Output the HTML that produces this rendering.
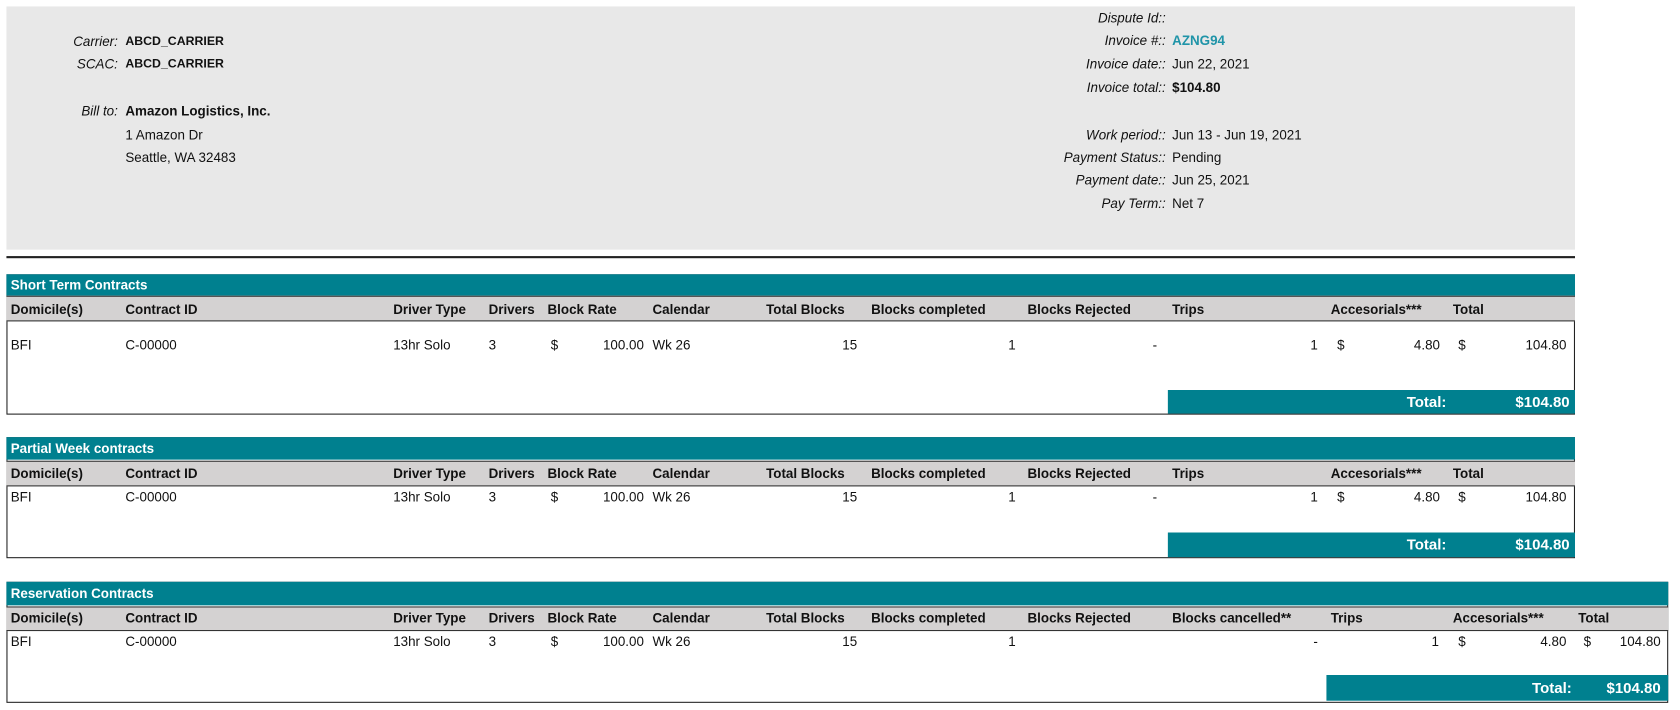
<!DOCTYPE html>
<html><head><meta charset="utf-8"><style>
body{margin:0;background:#fff;width:1680px;height:710px;overflow:hidden}
#w{position:absolute;left:0;top:0;width:1568px;height:663px;transform:scale(1.07143);transform-origin:0 0;font-family:"Liberation Sans",sans-serif;font-size:12.5px;color:#111}
div{position:absolute;white-space:nowrap}
.i{font-style:italic}
.b{font-weight:bold}
.l{line-height:16px}
.teal{background:#00808f}
.hdr{background:#d4d2d2;border-top:1px solid #333;border-bottom:1px solid #333}
.tt{color:#fff;font-weight:bold;font-size:12.5px}
.tot{color:#fff;font-weight:bold;font-size:14px}
</style></head><body><div id="w">
<div style="left:6px;top:6px;width:1464px;height:227px;background:#e8e8e8"></div>
<div style="left:6px;top:239px;width:1464px;height:2px;background:#222"></div>

<div class="i l" style="right:1458px;top:31px">Carrier:</div><div class="b l" style="left:117px;top:31px;font-size:11.5px">ABCD_CARRIER</div>
<div class="i l" style="right:1458px;top:52px">SCAC:</div><div class="b l" style="left:117px;top:52px;font-size:11.5px">ABCD_CARRIER</div>
<div class="i l" style="right:1458px;top:96px">Bill to:</div><div class="b l" style="left:117px;top:96px">Amazon Logistics, Inc.</div>
<div class="l" style="left:117px;top:118px">1 Amazon Dr</div>
<div class="l" style="left:117px;top:139px">Seattle, WA 32483</div>

<div class="i l" style="right:480px;top:9px">Dispute Id::</div>
<div class="i l" style="right:480px;top:30px">Invoice #::</div><div class="b l" style="left:1094px;top:30px;color:#1f94a8">AZNG94</div>
<div class="i l" style="right:480px;top:52px">Invoice date::</div><div class="l" style="left:1094px;top:52px">Jun 22, 2021</div>
<div class="i l" style="right:480px;top:74px">Invoice total::</div><div class="b l" style="left:1094px;top:74px">$104.80</div>
<div class="i l" style="right:480px;top:118px">Work period::</div><div class="l" style="left:1094px;top:118px">Jun 13 - Jun 19, 2021</div>
<div class="i l" style="right:480px;top:139px">Payment Status::</div><div class="l" style="left:1094px;top:139px">Pending</div>
<div class="i l" style="right:480px;top:160px">Payment date::</div><div class="l" style="left:1094px;top:160px">Jun 25, 2021</div>
<div class="i l" style="right:480px;top:182px">Pay Term::</div><div class="l" style="left:1094px;top:182px">Net 7</div>

<!-- Table 1 -->
<div style="left:6px;top:256px;width:1462px;height:129px;border:1px solid #222"></div>
<div class="teal" style="left:6px;top:256px;width:1464px;height:20px"></div>
<div class="tt l" style="left:10px;top:258px">Short Term Contracts</div>
<div class="hdr" style="left:6px;top:276px;width:1464px;height:22px"></div>
<div class="b l" style="top:281px;left:10px">Domicile(s)</div><div class="b l" style="top:281px;left:117px">Contract ID</div><div class="b l" style="top:281px;left:367px">Driver Type</div><div class="b l" style="top:281px;left:456px">Drivers</div><div class="b l" style="top:281px;left:511px">Block Rate</div><div class="b l" style="top:281px;left:609px">Calendar</div><div class="b l" style="top:281px;left:715px">Total Blocks</div><div class="b l" style="top:281px;left:813px">Blocks completed</div><div class="b l" style="top:281px;left:959px">Blocks Rejected</div><div class="b l" style="top:281px;left:1094px">Trips</div><div class="b l" style="top:281px;left:1242px">Accesorials***</div><div class="b l" style="top:281px;left:1356px">Total</div>
<div class="l" style="top:314px;left:10px">BFI</div><div class="l" style="top:314px;left:117px">C-00000</div><div class="l" style="top:314px;left:367px">13hr Solo</div><div class="l" style="top:314px;left:456px">3</div><div class="l" style="top:314px;left:514px">$</div><div class="l" style="top:314px;right:967px">100.00</div><div class="l" style="top:314px;left:609px">Wk 26</div><div class="l" style="top:314px;right:768px">15</div><div class="l" style="top:314px;right:620px">1</div><div class="l" style="top:314px;right:488px">-</div><div class="l" style="top:314px;right:338px">1</div><div class="l" style="top:314px;left:1248px">$</div><div class="l" style="top:314px;right:224px">4.80</div><div class="l" style="top:314px;left:1361px">$</div><div class="l" style="top:314px;right:106px">104.80</div>
<div class="teal" style="left:1090px;top:364px;width:380px;height:22px"></div>
<div class="tot l" style="right:218px;top:367px">Total:</div><div class="tot l" style="right:103px;top:367px">$104.80</div>

<!-- Table 2 -->
<div style="left:6px;top:408px;width:1462px;height:111px;border:1px solid #222"></div>
<div class="teal" style="left:6px;top:408px;width:1464px;height:21px"></div>
<div class="tt l" style="left:10px;top:411px">Partial Week contracts</div>
<div class="hdr" style="left:6px;top:430px;width:1464px;height:22px"></div>
<div class="b l" style="top:434px;left:10px">Domicile(s)</div><div class="b l" style="top:434px;left:117px">Contract ID</div><div class="b l" style="top:434px;left:367px">Driver Type</div><div class="b l" style="top:434px;left:456px">Drivers</div><div class="b l" style="top:434px;left:511px">Block Rate</div><div class="b l" style="top:434px;left:609px">Calendar</div><div class="b l" style="top:434px;left:715px">Total Blocks</div><div class="b l" style="top:434px;left:813px">Blocks completed</div><div class="b l" style="top:434px;left:959px">Blocks Rejected</div><div class="b l" style="top:434px;left:1094px">Trips</div><div class="b l" style="top:434px;left:1242px">Accesorials***</div><div class="b l" style="top:434px;left:1356px">Total</div>
<div class="l" style="top:456px;left:10px">BFI</div><div class="l" style="top:456px;left:117px">C-00000</div><div class="l" style="top:456px;left:367px">13hr Solo</div><div class="l" style="top:456px;left:456px">3</div><div class="l" style="top:456px;left:514px">$</div><div class="l" style="top:456px;right:967px">100.00</div><div class="l" style="top:456px;left:609px">Wk 26</div><div class="l" style="top:456px;right:768px">15</div><div class="l" style="top:456px;right:620px">1</div><div class="l" style="top:456px;right:488px">-</div><div class="l" style="top:456px;right:338px">1</div><div class="l" style="top:456px;left:1248px">$</div><div class="l" style="top:456px;right:224px">4.80</div><div class="l" style="top:456px;left:1361px">$</div><div class="l" style="top:456px;right:106px">104.80</div>
<div class="teal" style="left:1090px;top:497px;width:380px;height:23px"></div>
<div class="tot l" style="right:218px;top:500px">Total:</div><div class="tot l" style="right:103px;top:500px">$104.80</div>

<!-- Table 3 -->
<div style="left:6px;top:543px;width:1549px;height:111px;border:1px solid #222"></div>
<div class="teal" style="left:6px;top:543px;width:1551px;height:22px"></div>
<div class="tt l" style="left:10px;top:546px">Reservation Contracts</div>
<div class="hdr" style="left:6px;top:566px;width:1551px;height:21px"></div>
<div class="b l" style="top:569px;left:10px">Domicile(s)</div><div class="b l" style="top:569px;left:117px">Contract ID</div><div class="b l" style="top:569px;left:367px">Driver Type</div><div class="b l" style="top:569px;left:456px">Drivers</div><div class="b l" style="top:569px;left:511px">Block Rate</div><div class="b l" style="top:569px;left:609px">Calendar</div><div class="b l" style="top:569px;left:715px">Total Blocks</div><div class="b l" style="top:569px;left:813px">Blocks completed</div><div class="b l" style="top:569px;left:959px">Blocks Rejected</div><div class="b l" style="top:569px;left:1094px">Blocks cancelled**</div><div class="b l" style="top:569px;left:1242px">Trips</div><div class="b l" style="top:569px;left:1356px">Accesorials***</div><div class="b l" style="top:569px;left:1473px">Total</div>
<div class="l" style="top:591px;left:10px">BFI</div><div class="l" style="top:591px;left:117px">C-00000</div><div class="l" style="top:591px;left:367px">13hr Solo</div><div class="l" style="top:591px;left:456px">3</div><div class="l" style="top:591px;left:514px">$</div><div class="l" style="top:591px;right:967px">100.00</div><div class="l" style="top:591px;left:609px">Wk 26</div><div class="l" style="top:591px;right:768px">15</div><div class="l" style="top:591px;right:620px">1</div><div class="l" style="top:591px;right:338px">-</div><div class="l" style="top:591px;right:225px">1</div><div class="l" style="top:591px;left:1361px">$</div><div class="l" style="top:591px;right:106px">4.80</div><div class="l" style="top:591px;left:1478px">$</div><div class="l" style="top:591px;right:18px">104.80</div>
<div class="teal" style="left:1238px;top:630px;width:319px;height:24px"></div>
<div class="tot l" style="right:101px;top:634px">Total:</div><div class="tot l" style="right:18px;top:634px">$104.80</div>
</div></body></html>
